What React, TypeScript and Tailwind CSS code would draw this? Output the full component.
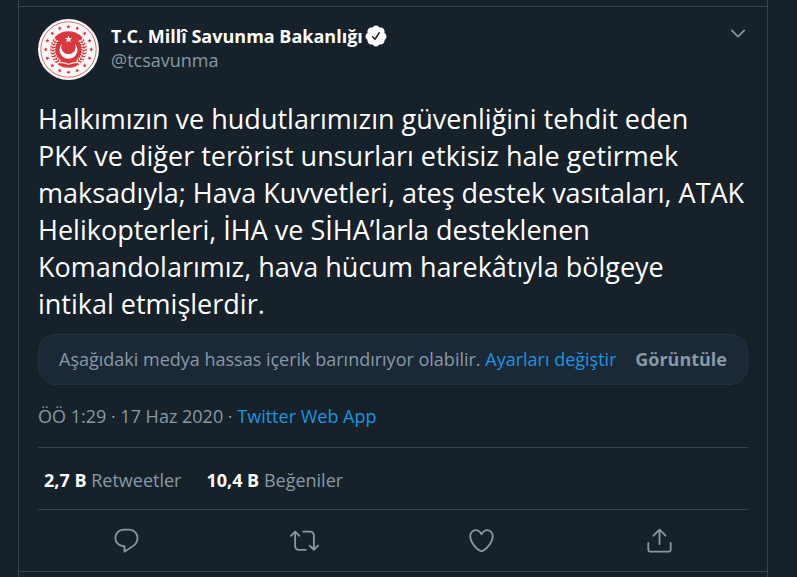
import React from "react";

const actions = [
  {
    label: "Yanıtla",
    path: "M14.046 2.242l-4.148-.01h-.002c-4.374 0-7.8 3.427-7.8 7.802 0 4.098 3.186 7.206 7.465 7.37v3.828c0 .108.044.286.12.403.142.225.384.347.632.347.138 0 .277-.038.402-.118.264-.168 6.473-4.14 8.088-5.506 1.902-1.61 3.04-3.97 3.043-6.312v-.017c-.006-4.367-3.43-7.787-7.8-7.788zm3.787 12.972c-1.134.96-4.862 3.405-6.772 4.643V16.67c0-.414-.335-.75-.75-.75h-.396c-3.66 0-6.318-2.476-6.318-5.886 0-3.534 2.768-6.302 6.3-6.302l4.147.01h.002c3.532 0 6.3 2.766 6.302 6.296-.003 1.91-.942 3.844-2.514 5.176z",
  },
  {
    label: "Retweetle",
    path: "M23.77 15.67c-.292-.293-.767-.293-1.06 0l-2.22 2.22V7.65c0-2.068-1.683-3.75-3.75-3.75h-5.85c-.414 0-.75.336-.75.75s.336.75.75.75h5.85c1.24 0 2.25 1.01 2.25 2.25v10.24l-2.22-2.22c-.293-.293-.768-.293-1.06 0s-.294.768 0 1.06l3.5 3.5c.145.147.337.22.53.22s.383-.072.53-.22l3.5-3.5c.294-.292.294-.767 0-1.06zm-10.66 3.28H7.26c-1.24 0-2.25-1.01-2.25-2.25V6.46l2.22 2.22c.148.147.34.22.532.22s.384-.073.53-.22c.293-.293.293-.768 0-1.06l-3.5-3.5c-.293-.294-.768-.294-1.06 0l-3.5 3.5c-.294.292-.294.767 0 1.06s.767.293 1.06 0l2.22-2.22V16.7c0 2.068 1.683 3.75 3.75 3.75h5.85c.414 0 .75-.336.75-.75s-.337-.75-.75-.75z",
  },
  {
    label: "Beğen",
    path: "M12 21.638h-.014C9.403 21.59 1.95 14.856 1.95 8.478c0-3.064 2.525-5.754 5.403-5.754 2.29 0 3.83 1.58 4.646 2.73.814-1.148 2.354-2.73 4.645-2.73 2.88 0 5.404 2.69 5.404 5.755 0 6.376-7.454 13.11-10.037 13.157H12zM7.354 4.225c-2.08 0-3.903 1.988-3.903 4.255 0 5.74 7.034 11.596 8.55 11.658 1.518-.062 8.55-5.917 8.55-11.658 0-2.267-1.823-4.255-3.903-4.255-2.528 0-3.94 2.936-3.952 2.965-.23.562-1.156.562-1.387 0-.014-.03-1.425-2.965-3.954-2.965z",
  },
  {
    label: "Paylaş",
    path: "M17.53 7.47l-5-5c-.293-.293-.768-.293-1.06 0l-5 5c-.294.293-.294.768 0 1.06s.767.294 1.06 0l3.72-3.72V15c0 .414.336.75.75.75s.75-.336.75-.75V4.81l3.72 3.72c.146.147.338.22.53.22s.384-.072.53-.22c.293-.293.293-.767 0-1.06zM19.708 21.944H4.292C3.028 21.944 2 20.916 2 19.652V14c0-.414.336-.75.75-.75s.75.336.75.75v5.652c0 .437.355.792.792.792h15.416c.437 0 .792-.355.792-.792V14c0-.414.336-.75.75-.75s.75.336.75.75v5.652c0 1.264-1.028 2.292-2.292 2.292z",
  },
];

const stats = [
  { count: "2,7 B", label: "Retweetler" },
  { count: "10,4 B", label: "Beğeniler" },
];

// five-pointed star with its centre at cx, cy
const star = (cx: number, cy: number, r: number, turn = 0) => {
  const points: string[] = [];
  for (let i = 0; i < 10; i++) {
    const a = (Math.PI / 5) * i - Math.PI / 2 + turn;
    const d = i % 2 === 0 ? r : r * 0.42;
    points.push(`${cx + d * Math.cos(a)},${cy + d * Math.sin(a)}`);
  }
  return points.join(" ");
};

const Emblem = () => {
  const ring = Array.from({ length: 16 }, (_, i) => (Math.PI / 8) * i);
  const leaves = Array.from({ length: 9 }, (_, i) => -36 + i * 11);
  return (
    <svg viewBox="0 0 61 61" className="size-[61px] shrink-0" aria-hidden="true">
      <circle cx="30.5" cy="30.5" r="30.5" fill="#fdfaf9" />
      <circle cx="30.5" cy="30.5" r="27.7" fill="none" stroke="#dd5a5c" strokeWidth="0.9" />
      <circle cx="30.5" cy="30.5" r="18.3" fill="#d9383c" />
      {ring.map((a) => (
        <polygon
          key={a}
          points={star(30.5 + 22.8 * Math.sin(a), 30.5 - 22.8 * Math.cos(a), 2.3, a)}
          fill="#d9383c"
        />
      ))}
      {leaves.map((deg) => (
        <g key={deg} fill="#fbeae8">
          <g transform={`translate(30.5 30.5) rotate(${deg})`}>
            <ellipse cx="17" cy="0" rx="1.9" ry="0.9" transform="rotate(-35 17 0)" />
            <ellipse cx="14.2" cy="0" rx="1.5" ry="0.8" transform="rotate(35 14.2 0)" />
          </g>
          <g transform={`translate(30.5 30.5) scale(-1 1) rotate(${deg})`}>
            <ellipse cx="17" cy="0" rx="1.9" ry="0.9" transform="rotate(-35 17 0)" />
            <ellipse cx="14.2" cy="0" rx="1.5" ry="0.8" transform="rotate(35 14.2 0)" />
          </g>
        </g>
      ))}
      <path
        d="M24.2 24.4A9 9 0 1 0 36.8 24.4A7.2 7.2 0 1 1 24.2 24.4Z"
        fill="#fff"
      />
      <polygon points={star(30.5, 20.3, 3.8)} fill="#fff" />
      <path
        d="M19.5 43.4Q25 43 30.5 45.2Q36 43 41.5 43.4"
        fill="none"
        stroke="#fbeae8"
        strokeWidth="1.2"
      />
    </svg>
  );
};

export default function App() {
  return (
    <div className="min-h-screen bg-[#16212a] px-[18px] font-['Open_Sans','Noto_Sans',sans-serif] text-[#8899a6]">
      <main className="mr-[11px] min-h-screen border-x border-[#38444d]">
        <article className="pt-[6px]">
          <div className="border-y border-[#38444d] px-[19px] pt-3">
            <header className="flex items-start">
              <Emblem />
              <div className="ml-3 min-w-0 flex-1 pt-[5px] text-lg leading-6">
                <div className="flex items-center gap-px font-bold text-white">
                  <h1>T.C. Millî Savunma Bakanlığı</h1>
                  <svg viewBox="0 0 24 24" className="size-6 shrink-0" fill="currentColor" aria-hidden="true">
                    <path d="M22.5 12.5c0-1.58-.875-2.95-2.148-3.6.154-.435.238-.905.238-1.4 0-2.21-1.71-3.998-3.818-3.998-.47 0-.92.084-1.336.25C14.818 2.415 13.51 1.5 12 1.5s-2.816.917-3.437 2.25c-.415-.165-.866-.25-1.336-.25-2.11 0-3.818 1.79-3.818 4 0 .494.083.964.237 1.4-1.272.65-2.147 2.018-2.147 3.6 0 1.495.782 2.798 1.942 3.486-.02.17-.032.34-.032.514 0 2.21 1.708 4 3.818 4 .47 0 .92-.086 1.335-.25.62 1.334 1.926 2.25 3.437 2.25 1.512 0 2.818-.916 3.437-2.25.415.163.865.248 1.336.248 2.11 0 3.818-1.79 3.818-4 0-.174-.012-.344-.033-.513 1.158-.687 1.943-1.99 1.943-3.484zm-6.616-3.334l-4.334 6.5c-.145.217-.382.334-.625.334-.143 0-.288-.04-.416-.126l-.115-.094-2.415-2.415c-.293-.293-.293-.768 0-1.06s.768-.294 1.06 0l1.77 1.767 3.825-5.74c.23-.345.696-.436 1.04-.207.346.23.44.696.21 1.04z" />
                  </svg>
                </div>
                <p>@tcsavunma</p>
              </div>
              <button type="button" aria-label="Daha fazla" className="pt-1">
                <svg viewBox="0 0 24 24" className="size-5" fill="currentColor">
                  <path d="M20.207 8.147c-.39-.39-1.023-.39-1.414 0L12 14.94 5.207 8.147c-.39-.39-1.023-.39-1.414 0-.39.39-.39 1.023 0 1.414l7.5 7.5c.195.196.45.294.707.294s.512-.098.707-.293l7.5-7.5c.39-.39.39-1.022 0-1.413z" />
                </svg>
              </button>
            </header>
            <p className="mt-5 text-[27px] leading-[37px] whitespace-pre-line text-white">
              {`Halkımızın ve hudutlarımızın güvenliğini tehdit eden
              PKK ve diğer terörist unsurları etkisiz hale getirmek
              maksadıyla; Hava Kuvvetleri, ateş destek vasıtaları, ATAK
              Helikopterleri, İHA ve SİHA’larla desteklenen
              Komandolarımız, hava hücum harekâtıyla bölgeye
              intikal etmişlerdir.`}
            </p>
            <div className="mt-3 flex items-center justify-between rounded-[18px] border border-[#253341] bg-[#1b2836] px-5 py-3 text-lg leading-[25px]">
              <p>
                Aşağıdaki medya hassas içerik barındırıyor olabilir.{" "}
                <a href="#" className="text-[#1b95e0]">
                  Ayarları değiştir
                </a>
              </p>
              <button type="button" className="font-bold">
                Görüntüle
              </button>
            </div>
            <p className="py-5 text-lg leading-[22px]">
              ÖÖ 1:29 · 17 Haz 2020 ·{" "}
              <a href="#" className="text-[#1b95e0]">
                Twitter Web App
              </a>
            </p>
            <div className="flex gap-[25px] border-y border-[#38444d] px-[6px] pt-5 pb-4 text-lg leading-[25px]">
              {stats.map((item) => (
                <a href="#" key={item.label}>
                  <span className="font-bold text-white">{item.count}</span> {item.label}
                </a>
              ))}
            </div>
            <div className="grid grid-cols-4 py-4">
              {actions.map((item) => (
                <button type="button" key={item.label} aria-label={item.label} className="flex justify-center">
                  <svg viewBox="0 0 24 24" className="size-[29px]" fill="currentColor">
                    <path d={item.path} />
                  </svg>
                </button>
              ))}
            </div>
          </div>
        </article>
      </main>
    </div>
  );
}
